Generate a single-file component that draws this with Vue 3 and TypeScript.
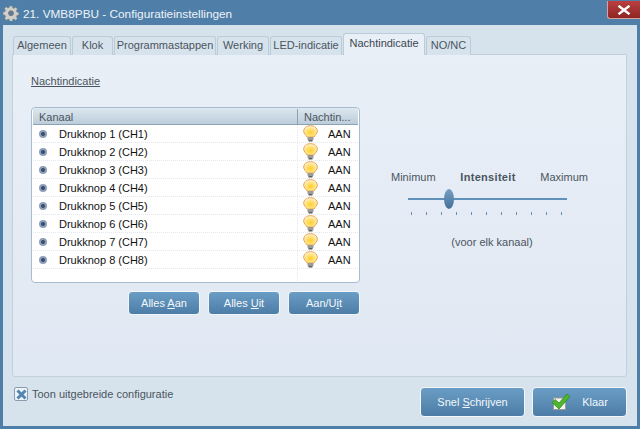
<template>
  <div class="window">
    <header class="titlebar">
      <svg class="gear" width="16" height="16" viewBox="0 0 18 18">
        <path d="M7.500 1h3l.4 2.200 1.400.6 1.900-1.300 2.100 2.100-1.300 1.900.6 1.400 2.200.4v3l-2.200.4-.6 1.400 1.300 1.900-2.100 2.100-1.900-1.300-1.400.6-.4 2.200h-3l-.4-2.200-1.400-.6-1.900 1.300-2.100-2.100 1.300-1.900-.6-1.400L0 10.800v-3l2.200-.4.6-1.400-1.300-1.900 2.100-2.100 1.900 1.300 1.400-.6z" fill="#cfcfcb" stroke="#77797a" stroke-width=".6" />
        <circle cx="9" cy="9.300" r="2.800" fill="#5f7f9c" stroke="#6a6a68" stroke-width=".8" />
      </svg>
      <span class="title">21. VMB8PBU - Configuratieinstellingen</span>
      <button class="close" type="button" aria-label="Sluiten">
        <svg width="14" height="10" viewBox="0 0 14 10">
          <path d="M1.500 .8 12.500 9.200M12.500 .8 1.500 9.200" stroke="#fff" stroke-width="2.400" />
        </svg>
      </button>
    </header>

    <div class="body">
      <nav class="tabs">
        <div
          v-for="tab in tabs"
          :key="tab.name"
          class="tab"
          :class="{ active: tab.name === activeTab }"
          :style="{ width: tab.width + 'px' }"
        >
          {{ tab.name }}
        </div>
      </nav>

      <section class="panel">
        <h2 class="heading">Nachtindicatie</h2>

        <div class="content">
          <div class="left">
            <div class="grid">
              <div class="grid-head">
                <div class="col-name">Kanaal</div>
                <div class="col-state">Nachtin...</div>
              </div>
              <div v-for="n in 8" :key="n" class="row">
                <div class="col-name">
                  <span class="bullet"></span>
                  <span>Drukknop {{ n }} (CH{{ n }})</span>
                </div>
                <div class="col-state">
                  <svg class="bulb" width="15" height="17" viewBox="0 0 15 17">
                    <defs>
                      <radialGradient :id="'glow' + n" cx=".5" cy=".6" r=".55">
                        <stop offset="0" stop-color="#ffcf2a" />
                        <stop offset=".6" stop-color="#ffe27c" />
                        <stop offset="1" stop-color="#fff3d6" />
                      </radialGradient>
                    </defs>
                    <path d="M7.500 .7C3.500 .7 .7 3.100 .7 6.200c0 2.500 2.300 3.600 3.300 5.800h7c1-2.200 3.300-3.300 3.300-5.800C14.300 3.100 11.500 .7 7.500 .7z" :fill="'url(#glow' + n + ')'" stroke="#e8a24a" stroke-width="1" />
                    <rect x="4.500" y="12" width="6" height="3.200" rx=".8" fill="#9a9a9a" />
                    <rect x="5.500" y="15" width="4" height="1.500" fill="#5e5e5e" />
                  </svg>
                  <span class="state-text">AAN</span>
                </div>
              </div>
              <div class="row empty">
                <div class="col-name"></div>
                <div class="col-state"></div>
              </div>
            </div>

            <div class="grid-buttons">
              <button class="btn small" type="button">Alles <u>A</u>an</button>
              <button class="btn small" type="button">Alles <u>U</u>it</button>
              <button class="btn small" type="button">Aan/U<u>i</u>t</button>
            </div>
          </div>

          <div class="intensity">
            <div class="labels">
              <span>Minimum</span>
              <strong>Intensiteit</strong>
              <span>Maximum</span>
            </div>
            <div class="slider">
              <div class="track"></div>
              <div class="thumb"></div>
            </div>
            <div class="ticks">
              <i v-for="t in 11" :key="t"></i>
            </div>
            <div class="note">(voor elk kanaal)</div>
          </div>
        </div>
      </section>

      <footer class="footer">
        <label class="check">
          <span class="box">
            <svg width="11" height="11" viewBox="0 0 11 11">
              <path d="M1.500 1.500 9.500 9.500M9.500 1.500 1.500 9.500" stroke="#4f86b4" stroke-width="3" />
            </svg>
          </span>
          <span>Toon uitgebreide configuratie</span>
        </label>
        <div class="actions">
          <button class="btn large write" type="button">Snel <u>S</u>chrijven</button>
          <button class="btn large done" type="button">
            <svg width="20" height="18" viewBox="0 0 20 18">
              <rect x="2.500" y="5" width="12" height="11.500" fill="#f4f4f0" stroke="#9a9a96" />
              <path d="M1 9.500 4 6.500 8 10 16 1l3 2.500L8 16z" fill="#4fb52e" stroke="#2f8a1c" stroke-width=".8" />
            </svg>
            <span>Klaar</span>
          </button>
        </div>
      </footer>
    </div>
  </div>
</template>

<script setup lang="ts">
interface Tab {
  name: string
  width: number
}

const activeTab = 'Nachtindicatie'

const tabs: Tab[] = [
  { name: 'Algemeen', width: 58 },
  { name: 'Klok', width: 41 },
  { name: 'Programmastappen', width: 102 },
  { name: 'Werking', width: 52 },
  { name: 'LED-indicatie', width: 72 },
  { name: 'Nachtindicatie', width: 82 },
  { name: 'NO/NC', width: 45 }
]
</script>

<style>
html,
body {
  margin: 0;
  background: #4f7fa8;
}
</style>

<style scoped>
.window {
  width: 640px;
  height: 429px;
  display: flex;
  flex-direction: column;
  background: #4f7fa8;
  font-family: "Liberation Sans", Arial, sans-serif;
  font-size: 11px;
  color: #4a5560;
  overflow: hidden;
}

.titlebar {
  height: 25px;
  flex: none;
  display: flex;
  align-items: flex-start;
  padding: 5px 0 0 3px;
  box-sizing: border-box;
}

.gear {
  flex: none;
}

.title {
  margin-left: 4px;
  margin-top: 2px;
  font-size: 11.8px;
  line-height: 14px;
  color: #eef3f7;
  flex: 1;
}

.close {
  width: 33px;
  height: 18px;
  margin-top: -4px;
  padding: 0;
  flex: none;
  display: flex;
  align-items: center;
  justify-content: center;
  border: 1px solid #d9a0a0;
  border-top: none;
  border-right: none;
  border-radius: 0 0 0 3px;
  background: linear-gradient(#bb4040, #8f2424);
}

.body {
  flex: 1;
  margin: 0 3px 3px;
  padding: 8px 10px 0 9px;
  background: #d7e3ec;
  display: flex;
  flex-direction: column;
  min-height: 0;
}

.tabs {
  height: 22px;
  margin-bottom: -1px;
  flex: none;
  display: flex;
  align-items: flex-end;
  gap: 1px;
  padding-left: 1px;
  position: relative;
  z-index: 1;
}

.tab {
  height: 19px;
  box-sizing: border-box;
  flex: none;
  text-align: center;
  line-height: 17px;
  border: 1px solid #bccbd8;
  border-bottom: none;
  border-radius: 3px 3px 0 0;
  background: #d7e3ec;
  white-space: nowrap;
}

.tab.active {
  height: 22px;
  line-height: 18px;
  padding-bottom: 3px;
  background: #e9eff7;
  color: #3c4652;
}

.panel {
  height: 323px;
  flex: none;
  box-sizing: border-box;
  padding: 19px 18px 0;
  border: 1px solid #c3d0dc;
  border-radius: 0 0 3px 3px;
  background: linear-gradient(#e9eff7, #e0e8f3);
}

.heading {
  margin: 0;
  font-size: 11px;
  font-weight: normal;
  line-height: 14px;
  text-decoration: underline;
}

.content {
  margin-top: 19px;
  display: flex;
}

.left {
  width: 329px;
  flex: none;
}

.grid {
  height: 176px;
  box-sizing: border-box;
  width: 329px;
  border: 1px solid #a9bccd;
  border-radius: 4px;
  background: #fff;
  overflow: hidden;
}

.grid-head {
  display: flex;
  height: 17px;
  margin: 0 1px;
  padding-top: 1px;
  line-height: 16px;
  background: linear-gradient(#dde7ef, #bccdda);
  border-bottom: 1px solid #8ca3b6;
  box-sizing: border-box;
}

.grid-head .col-name {
  padding-left: 6px;
  border-right: 1px solid #8ca3b6;
  width: 265px;
  flex: none;
  box-sizing: border-box;
}

.grid-head .col-state {
  padding-left: 6px;
  flex: 1;
}

.row {
  display: flex;
  height: 18px;
  box-sizing: border-box;
  margin: 0 1px;
  border-bottom: 1px dotted #e4e8ec;
  color: #111;
}

.row .col-name {
  width: 265px;
  flex: none;
  box-sizing: border-box;
  display: flex;
  align-items: center;
  gap: 12px;
  padding-left: 6px;
  border-right: 1px dotted #e4e8ec;
}

.row .col-state {
  flex: 1;
  display: flex;
  align-items: center;
  padding-left: 5px;
}

.row.empty {
  border-bottom: none;
}

.bulb {
  flex: none;
}

.state-text {
  margin-left: 10px;
}

.bullet {
  width: 8px;
  height: 8px;
  flex: none;
  box-sizing: border-box;
  border-radius: 50%;
  background: #3d5478;
  border: 2px solid #8e9fb8;
  box-shadow: inset 0 0 0 1px #2f4568;
}

.grid-buttons {
  margin-top: 8px;
  margin-left: 97px;
  display: flex;
  gap: 8px;
}

.btn {
  box-sizing: border-box;
  padding: 0;
  font-family: inherit;
  font-size: 11px;
  color: #f3f7fa;
  border: 1px solid #f2f6f9;
  border-radius: 4px;
  background: linear-gradient(#6a9dc5, #4d7da6);
}

.btn.small {
  width: 72px;
  height: 24px;
}

.intensity {
  margin-left: 31px;
  margin-top: 63px;
  width: 197px;
  text-align: center;
}

.labels {
  display: flex;
  justify-content: space-between;
  line-height: 14px;
}

.labels strong {
  letter-spacing: .3px;
}

.slider {
  position: relative;
  height: 20px;
  margin: 5px 21px 0 17px;
  display: flex;
  align-items: center;
}

.track {
  width: 100%;
  height: 2px;
  background: #5f91bb;
}

.thumb {
  position: absolute;
  left: 36px;
  top: 0;
  width: 10px;
  height: 20px;
  border-radius: 50%;
  background: linear-gradient(#7aa0c2, #3f6f9a);
}

.ticks {
  display: flex;
  justify-content: space-between;
  margin: 3px 26px 0 20px;
}

.ticks i {
  width: 1px;
  height: 3px;
  background: #5f91bb;
}

.note {
  margin-top: 20px;
  margin-left: 5px;
  line-height: 14px;
}

.footer {
  flex: 1;
  display: flex;
  justify-content: space-between;
  align-items: flex-start;
}

.check {
  display: flex;
  align-items: center;
  gap: 4px;
  margin-top: 10px;
  margin-left: 2px;
  line-height: 14px;
}

.box {
  width: 14px;
  height: 14px;
  box-sizing: border-box;
  display: flex;
  align-items: center;
  justify-content: center;
  border: 1px solid #8a9cae;
  border-radius: 2px;
  background: #eef3f7;
}

.actions {
  display: flex;
  gap: 7px;
  margin-top: 10px;
}

.btn.large {
  height: 30px;
}

.btn.write {
  width: 105px;
}

.btn.done {
  width: 95px;
  display: flex;
  align-items: center;
  justify-content: center;
  gap: 11px;
}
</style>
